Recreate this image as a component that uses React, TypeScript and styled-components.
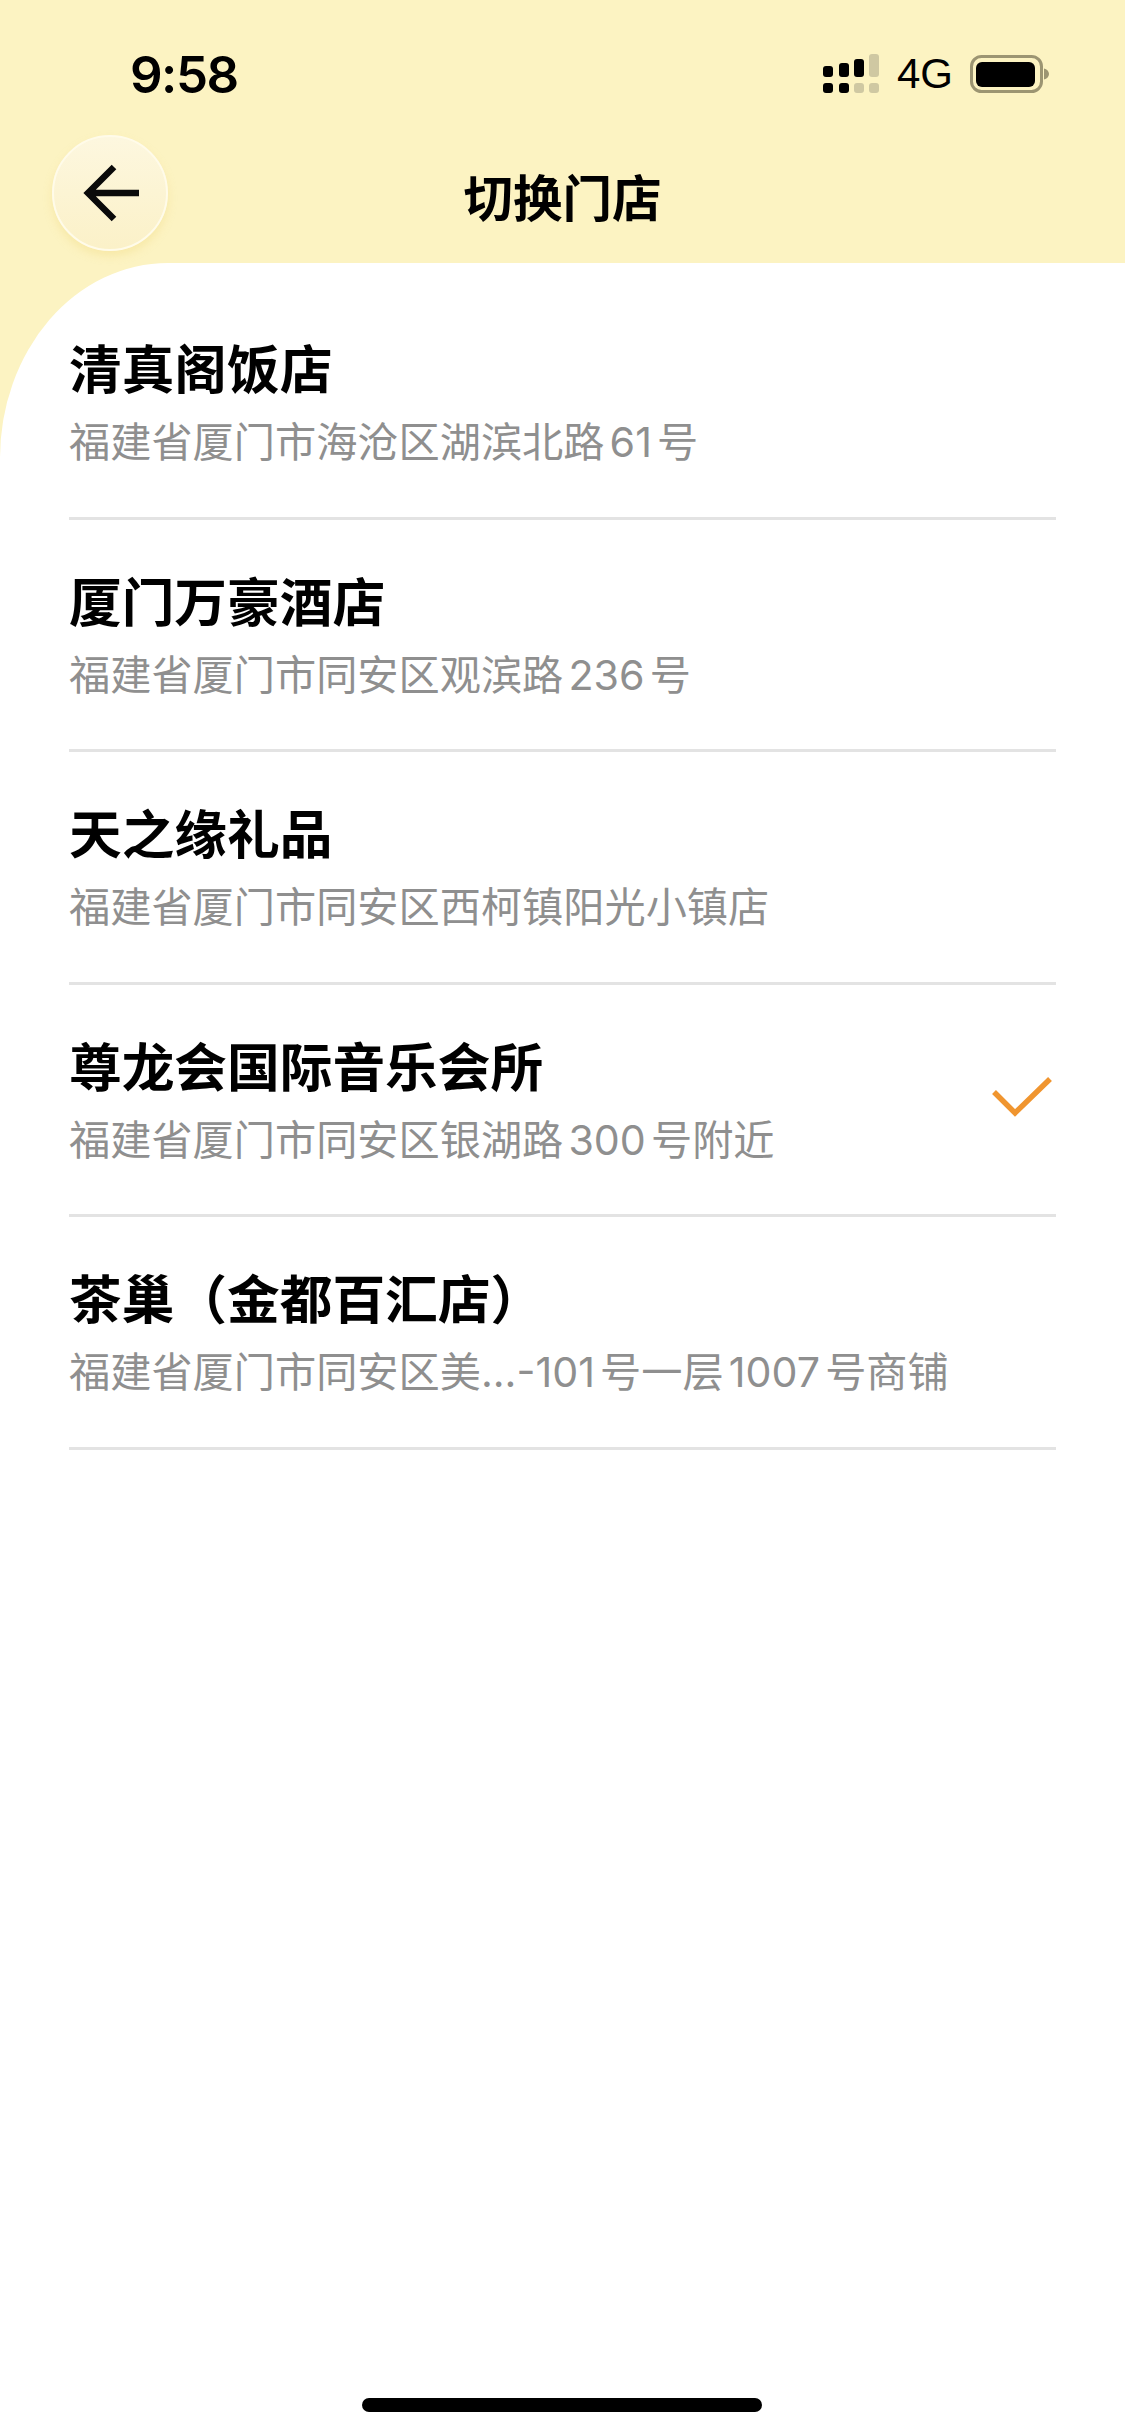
import React from "react";
import styled, { createGlobalStyle } from "styled-components";

const Global = createGlobalStyle`
  html, body { margin: 0; padding: 0; background: #fcf3c2; }
  * { box-sizing: border-box; }
`;

const Page = styled.div`
  width: 1125px;
  height: 2435px;
  overflow: hidden;
  display: flex;
  flex-direction: column;
  background: #fcf3c2;
  font-family: "Noto Sans CJK SC", "Noto Sans", sans-serif;
`;

const Header = styled.header`
  height: 263px;
  flex: none;
  display: flex;
  flex-direction: column;
`;

const StatusBar = styled.div`
  height: 135px;
  padding: 46px 0 0 130px;
  display: flex;
  align-items: flex-start;
  justify-content: space-between;
`;

const Time = styled.div`
  font-family: Inter, "Liberation Sans", sans-serif;
  font-weight: 600;
  font-size: 51px;
  line-height: 58px;
  letter-spacing: -1.5px;
  color: #000;
`;

const StatusIcons = styled.div`
  display: flex;
  align-items: center;
  margin: 5px 76px 0 0;
`;

const Network = styled.span`
  font-family: "Liberation Sans", sans-serif;
  font-size: 42px;
  line-height: 46px;
  margin: 0 17px 0 17px;
  color: #000;
`;

const NavBar = styled.div`
  position: relative;
  height: 128px;
  padding-left: 52px;
  display: flex;
  align-items: flex-start;
`;

const BackButton = styled.button`
  position: relative;
  z-index: 2;
  width: 116px;
  height: 116px;
  padding: 0;
  border-radius: 50%;
  border: 2px solid #fffbe9;
  background: linear-gradient(180deg, #fdf7df 0%, #fbf1c8 100%);
  box-shadow: 0 5px 8px rgba(240, 215, 120, 0.35);
  display: flex;
  align-items: center;
  justify-content: center;
`;

const Title = styled.h1`
  position: absolute;
  left: 0;
  right: 0;
  top: 26px;
  margin: 0;
  text-align: center;
  font-size: 49.5px;
  line-height: 70px;
  font-weight: 700;
  color: #000;
`;

const Card = styled.main`
  flex: 1;
  background: #fff;
  border-top-left-radius: 168px 195px;
  padding: 24px 69px 0 69px;
  display: flex;
  flex-direction: column;
`;

const Row = styled.div`
  height: 232.5px;
  flex: none;
  border-bottom: 3px solid #e3e3e3;
  display: flex;
  align-items: flex-start;
  justify-content: space-between;
`;

const Info = styled.div`
  display: flex;
  flex-direction: column;
`;

const Name = styled.div`
  margin-top: 43px;
  font-size: 52.7px;
  line-height: 72px;
  font-weight: 700;
  color: #000;
  white-space: nowrap;
`;

const Address = styled.div`
  margin-top: 4px;
  font-family: Inter, "Noto Sans CJK SC", sans-serif;
  font-size: 41.2px;
  line-height: 73px;
  font-weight: 400;
  color: #8f8f8f;
  white-space: nowrap;
  text-autospace: normal;
`;

const CheckMark = styled.svg`
  margin: 92px 4px 0 0;
  flex: none;
`;

const HomeBar = styled.div`
  width: 400px;
  height: 14px;
  border-radius: 7px;
  background: #000;
  margin: auto 0 23px -2px;
  align-self: center;
`;

const shops = [
  { name: "清真阁饭店", addr: "福建省厦门市海沧区湖滨北路61号" },
  { name: "厦门万豪酒店", addr: "福建省厦门市同安区观滨路236号" },
  { name: "天之缘礼品", addr: "福建省厦门市同安区西柯镇阳光小镇店" },
  { name: "尊龙会国际音乐会所", addr: "福建省厦门市同安区银湖路300号附近", selected: true },
  { name: "茶巢（金都百汇店）", addr: "福建省厦门市同安区美...-101号一层1007号商铺" },
];

const SignalIcon = () => (
  <svg width="57" height="40" viewBox="0 0 57 40">
    <rect x="0" y="12" width="10" height="11" rx="3" fill="#000" />
    <rect x="16" y="9" width="10" height="14" rx="3" fill="#000" />
    <rect x="31" y="5" width="10" height="18" rx="3" fill="#000" />
    <rect x="46" y="0" width="10" height="23" rx="3" fill="#cfc8a2" />
    <rect x="0" y="29" width="10" height="10" rx="3" fill="#000" />
    <rect x="16" y="29" width="10" height="10" rx="3" fill="#000" />
    <rect x="31" y="29" width="10" height="10" rx="3" fill="#cfc8a2" />
    <rect x="46" y="29" width="10" height="10" rx="3" fill="#cfc8a2" />
  </svg>
);

const BatteryIcon = () => (
  <svg width="79" height="38" viewBox="0 0 79 38">
    <rect x="1.5" y="1.5" width="70" height="35" rx="10" fill="none" stroke="#9c9572" strokeWidth="3" />
    <rect x="6" y="7" width="59" height="25" rx="6" fill="#000" />
    <path d="M74 13.5c3 .6 5 3 5 5.500s-2 4.900-5 5.500z" fill="#9c9572" />
  </svg>
);

export default function App() {
  return (
    <Page>
      <Global />
      <Header>
        <StatusBar>
          <Time>9:58</Time>
          <StatusIcons>
            <SignalIcon />
            <Network>4G</Network>
            <BatteryIcon />
          </StatusIcons>
        </StatusBar>
        <NavBar>
          <BackButton aria-label="返回">
            <svg width="62" height="60" viewBox="0 0 62 60" fill="none">
              <path d="M35 4 9 30l26 26M9 30h51" stroke="#0a0a0a" strokeWidth="6.500" />
            </svg>
          </BackButton>
          <Title>切换门店</Title>
        </NavBar>
      </Header>
      <Card>
        {shops.map((s) => (
          <Row key={s.name}>
            <Info>
              <Name>{s.name}</Name>
              <Address>{s.addr}</Address>
            </Info>
            {s.selected && (
              <CheckMark width="60" height="42" viewBox="0 0 60 42" fill="none">
                <path d="M2 15l21 21L58 2" stroke="#f0952f" strokeWidth="5.500" />
              </CheckMark>
            )}
          </Row>
        ))}
        <HomeBar />
      </Card>
    </Page>
  );
}
